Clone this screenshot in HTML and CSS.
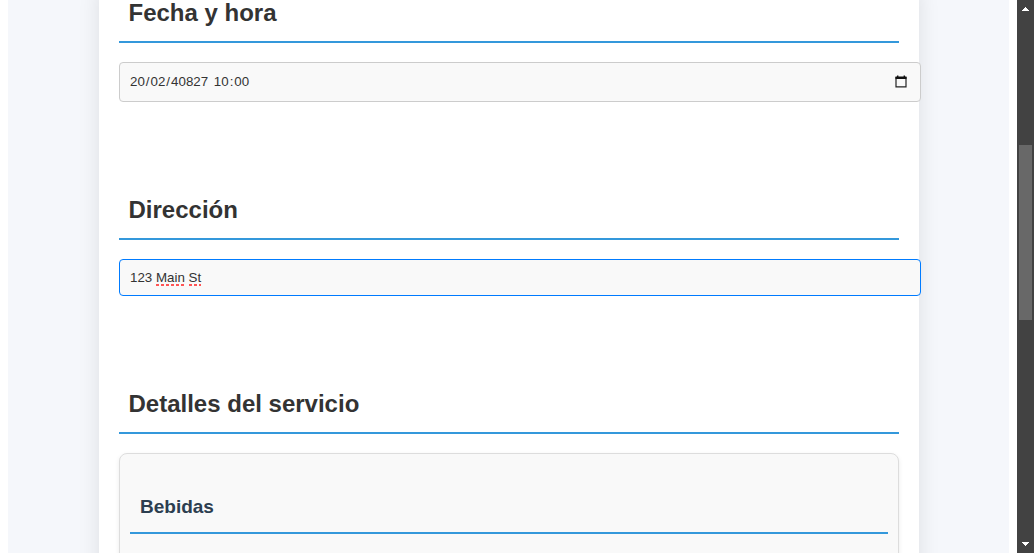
FILE: index.html
```html
<!DOCTYPE html>
<html lang="es">
<head>
<meta charset="utf-8">
<title>Fecha y hora</title>
<link rel="stylesheet" href="styles.css">
</head>
<body>
<div class="viewport">
  <div class="page">
    <main class="card">
      <section class="block">
        <h2 class="title">Fecha y hora</h2>
        <div class="field field-date">
          <span class="date"><span class="part first">20</span>/<span class="part">02</span>/<span class="part">40827</span> <span class="part hour">10</span>:<span class="part">00</span></span>
          <svg class="calendar" width="12" height="13" viewBox="0 0 12 13"><path d="M1 2.5h10v9.4H1z" fill="none" stroke="#222" stroke-width="1.2"/><path d="M.5 1.5h11V4H.5zM2 .4h1.4v2H2zM8.6 .4H10v2H8.6z" fill="#111"/></svg>
        </div>
      </section>
      <section class="block">
        <h2 class="title">Dirección</h2>
        <div class="field field-text">123&nbsp;<span class="misspelled">Main</span>&nbsp;<span class="misspelled">St</span></div>
      </section>
      <section class="block">
        <h2 class="title">Detalles del servicio</h2>
        <div class="panel"><h3 class="subtitle">Bebidas</h3></div>
      </section>
    </main>
  </div>
  <aside class="scrollbar">
    <svg class="arrow" width="8" height="4" viewBox="0 0 8 4" shape-rendering="crispEdges"><path d="M0 4V3h1V2h1V1h1V0h1v1h1v1h1v1h1v1z" fill="#fff"/></svg>
    <div class="track"><div class="thumb"></div></div>
    <svg class="arrow" width="8" height="4" viewBox="0 0 8 4" shape-rendering="crispEdges"><path d="M0 0v1h1v1h1v1h1v1h1V3h1V2h1V1h1V0z" fill="#fff"/></svg>
  </aside>
</div>
</body>
</html>
```
FILE: styles.css
```css
* { box-sizing: border-box; }
body {
  margin: 0;
  background: #fff;
  color: #333;
  font-family: "Liberation Sans", Arial, sans-serif;
  overflow: hidden;
}
.viewport { display: flex; height: 553px; overflow: hidden; }
.page {
  width: 1001px;
  margin: 0 8px;
  padding-left: 91px;
  background: #f5f7fb;
  overflow: hidden;
}
.card {
  width: 820px;
  height: 700px;
  margin-top: -10px;
  padding: 0 20px;
  background: #fff;
  box-shadow: 0 0 20px rgba(0, 0, 0, 0.1);
}
.title {
  height: 53px;
  margin: 0 0 19px;
  padding: 10px 9.5px 0;
  border-bottom: 2px solid #3498db;
  font-size: 24px;
  line-height: 26px;
}
.block + .block { margin-top: 85px; }
.field {
  display: flex;
  align-items: center;
  width: 802px;
  padding: 0 10px;
  border: 1px solid #ccc;
  border-radius: 4px;
  background: #f9f9f9;
  font-size: 13.333px;
}
.field-date {
  height: 40px;
  justify-content: space-between;
  padding-right: 13px;
  padding-bottom: 2px;
}
.date { white-space: pre; }
.part { padding: 0 1px; }
.first { padding-left: 0; }
.field-text { height: 37px; border-color: #007bff; }
.misspelled {
  margin-bottom: -1px;
  padding-bottom: 1px;
  background: repeating-linear-gradient(90deg, #f55 0 3px, transparent 3px 5px) left bottom / 100% 2px no-repeat;
}
.panel {
  height: 150px;
  padding: 30px 10px;
  border: 1px solid #ddd;
  border-radius: 8px;
  background: #f9f9f9;
  box-shadow: 0 2px 5px rgba(0, 0, 0, 0.08);
}
.subtitle {
  height: 50px;
  margin: 0;
  padding: 10px;
  border-bottom: 2px solid #3498db;
  color: #2c3e50;
  font-size: 19px;
  line-height: 25px;
}
.scrollbar {
  display: flex;
  flex-direction: column;
  align-items: center;
  width: 17px;
  padding: 7px 0;
  background: #424242;
}
.track { flex: 1; width: 13px; padding-top: 134px; }
.thumb { height: 175px; background: #686868; }
```
